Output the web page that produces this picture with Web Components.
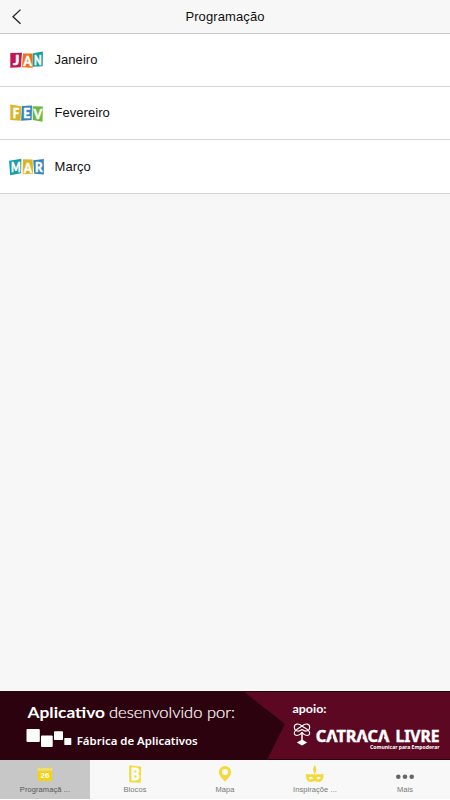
<!DOCTYPE html>
<html lang="pt-BR">
<head>
<meta charset="utf-8">
<title>Programação</title>
<style>
html,body{margin:0;height:100%;background:#f7f7f7;font-family:"Liberation Sans",Arial,sans-serif;color:#111}
</style>
</head>
<body>
<program-app></program-app>
<script>
class Base extends HTMLElement{
  constructor(){super();this.attachShadow({mode:'open'});}
  connectedCallback(){this.shadowRoot.innerHTML=this.view();}
}
customElements.define('nav-header',class extends Base{
  view(){return `<style>
:host{display:grid;grid-template-columns:40px 1fr 40px;align-items:center;height:33px;background:#f7f7f7;border-bottom:1px solid #c9c9c9;flex:none}
svg{display:block}
h1{margin:0;font-size:13px;font-weight:400;text-align:center;line-height:33px;letter-spacing:.1px}
</style><svg width="40" height="33" fill="none" stroke="#222" stroke-width="1.3"><path d="M20.500 9.600 13 16.700l7.500 7.100"/></svg><h1><slot></slot></h1>`}
});
const months={
 jan:`<path fill="#c2164f" d="M.3 3 12 2.800 10.800 17.300.3 17.700z"/><path fill="#ef701c" d="m13 3.400 9.700.1.1 14.300-10.900-.6z"/><path fill="#129fa3" d="m23 3.300 9.900-1.900-.2 14.800-9.700.6z"/>
 <text x="3" y="14.800" textLength="6.500">J</text><text x="13.400" y="15.600" textLength="8.300">A</text><text x="24" y="14.600" textLength="7.600">N</text>`,
 fev:`<path fill="#dcb528" d="m.3 1.600 11.200 1.700-1 14.500-10.200-.9z"/><path fill="#3485bd" d="m12 3.100 10-.6-.3 14.600-10.600.6z"/><path fill="#6ab83c" d="m22.600 3.300 10.300.3-.4 15.200-9.700-1.800z"/>
 <text x="2.800" y="14.800" textLength="6.500">F</text><text x="13.300" y="15.400" textLength="7">E</text><text x="23.600" y="15.800" textLength="8.700">V</text>`,
 mar:`<path fill="#16a0a5" d="m-1 3.700 12.400-2-.3 14.500-10.900 2z"/><path fill="#dcb528" d="m13 2.300 9.600.2.500 14.300-10.500.5z"/><path fill="#3485bd" d="m23.200 3.300 10.600-1.200.1 15.500-9.600-.8z"/>
 <text x="1" y="14.900" textLength="9.600">M</text><text x="13.800" y="15.500" textLength="8.300">A</text><text x="25" y="14.900" textLength="7.600">R</text>`};
customElements.define('month-row',class extends Base{
  view(){return `<style>
:host{display:flex;align-items:center;gap:10.500px;padding-left:10px;height:52px;background:#fff;border-bottom:1px solid #d6d6d6;flex:none}
:host(:last-child){height:53px}
svg{display:block;overflow:visible;flex:none}
svg text{font:900 14px Lato,sans-serif;fill:#fff;stroke:#fff;stroke-width:.45px}
span{font-size:13px;line-height:16px;color:#111;letter-spacing:.05px}
</style><svg width="34" height="20">${months[this.getAttribute('month')].replace(/textLength/g,'lengthAdjust="spacingAndGlyphs" textLength')}</svg><span><slot></slot></span>`}
});
customElements.define('sponsor-banner',class extends Base{
  view(){return `<style>
:host{display:block;height:69px;flex:none}
svg{display:block}
text{fill:#fff}
.l{font-family:Lato,sans-serif}.o{font-family:"Noto Sans","Open Sans",sans-serif}
.c{font:700 16.200px "Noto Sans",sans-serif;stroke:#fff;stroke-width:.45px}
</style><svg width="450" height="69" viewBox="0 691 450 69">
<path fill="#5c0822" d="M0 691h450v69H0z"/><path fill="#2d020f" d="M0 691h243l42 33-18 36H0z"/>
<path stroke="#27050f" d="M0 691.500h450M0 759.500h450"/>
<text class="l" x="27.500" y="717.600" font-size="16" font-weight="700" textLength="77.500" lengthAdjust="spacingAndGlyphs">Aplicativo</text>
<text class="l" x="109" y="717.600" font-size="16" font-weight="300" textLength="126" lengthAdjust="spacingAndGlyphs" stroke="#fff" stroke-width=".2">desenvolvido por:</text>
<g fill="#fff"><rect x="26.500" y="729" width="13.300" height="13" rx="1"/><rect x="41" y="735.400" width="11.700" height="11.600" rx="1"/><rect x="54" y="731.200" width="9" height="8.800" rx=".8"/><rect x="64.300" y="738" width="7" height="7" rx=".6"/></g>
<text class="o" x="76.700" y="745.300" font-size="11.500" font-weight="600" textLength="121" lengthAdjust="spacingAndGlyphs">Fábrica de Aplicativos</text>
<text class="l" x="292.500" y="713" font-size="10.500" font-weight="700" textLength="34" lengthAdjust="spacingAndGlyphs">apoio:</text>
<g fill="none" stroke="#fff" stroke-width="1.150"><path d="M302 729.500c-4 3.200-7.700 1-7.700-2.300s3.700-4.500 7.700-1.200c4-3.300 7.700-2.100 7.700 1.200s-3.700 5.500-7.700 2.300"/><path d="M302 726c-5 3.500-7.700 4.500-7.700 7 0 3.300 4.500 3.500 7.700-.3 3.200 3.800 7.700 3.600 7.700.3 0-2.500-2.700-3.500-7.700-7"/><path stroke-width="1.500" d="M302 732v10"/></g><path fill="#fff" d="m302 739.500 5.200 3-5.200 3-5.200-3z"/>
<text class="c" x="315.800" y="741.700" textLength="73.500" lengthAdjust="spacingAndGlyphs">CATRACA</text>
<text class="c" x="395.500" y="741.700" textLength="44" lengthAdjust="spacingAndGlyphs">LIVRE</text>
<g fill="#5c0822"><path d="m332.300 734.500 2 7.900h-4zM361.800 734.500l2 7.900h-4zM383.300 734.500l2 7.900h-4z"/></g>
<text class="o" x="370" y="748.800" font-size="5.800" font-weight="700" textLength="69.500" lengthAdjust="spacingAndGlyphs">Comunicar para Empoderar</text>
</svg>`}
});
const icons={
calendar:`<path fill="#f5d30c" d="M37.700 771.200h14.300v9.600H37.700z"/><path fill="#f3df69" d="M37.500 768h14.700v2.700H37.500z"/><path fill="#f5d30c" d="M39.500 767h2v1.600h-2zM48.500 767h2v1.600h-2z"/><text x="40.500" y="778.300" font-size="7" font-weight="700" fill="#fff" textLength="9" lengthAdjust="spacingAndGlyphs">26</text>`,
blocks:`<path fill="#f2da3c" d="m39.200 765.200 12 1.500-.5 16-11.500-.5z"/><text x="41" y="780.200" font-family="Lato" font-size="16.500" font-weight="900" fill="#fff" textLength="8.800" lengthAdjust="spacingAndGlyphs" stroke="#fff" stroke-width=".8">B</text>`,
pin:`<path fill="#f2da3c" fill-rule="evenodd" d="M45 766a6.100 6.100 0 0 0-6.100 6.100c0 4 3.800 6.900 6.100 9.700 2.300-2.800 6.100-5.700 6.100-9.700A6.100 6.100 0 0 0 45 766m0 3a3 3 0 1 1 0 6 3 3 0 0 1 0-6"/>`,
mask:`<path fill="#f2da3c" fill-rule="evenodd" d="M44.700 765c2.200 3 2 5.500.5 8.300v2h-1v-2c-1.500-2.800-1.500-5.300.5-8.300M36 773.700c2.500 1.200 5-.2 8.700 1.200 3.700-1.400 6.200 0 8.700-1.200.8 5.500-1.900 8.300-5 8.300-2 0-3-1.300-3.700-1.300s-1.700 1.300-3.700 1.300c-3.100 0-5.800-2.800-5-8.300m2.500 4.300c1.500 1.600 3.200 1.600 4.600.2-1.300-1.800-3.200-1.700-4.600-.2m7.800.2c1.400 1.400 3.100 1.400 4.600-.2-1.400-1.500-3.300-1.600-4.600.2"/>`,
dots:`<g fill="#666"><circle cx="38.300" cy="776.800" r="2.300"/><circle cx="45" cy="776.800" r="2.300"/><circle cx="51.700" cy="776.800" r="2.300"/></g>`};
customElements.define('tab-item',class extends Base{
  view(){return `<style>
:host{display:flex;flex-direction:column;align-items:center;height:39px;flex:1;background:#f8f8f8}
:host([active]){background:#c7c7c7}
svg{display:block;flex:none}
span{font-size:7.500px;line-height:9px;margin-top:1.200px;color:#777;white-space:pre;letter-spacing:.08px}
:host([active]) span{color:#555}
</style><svg width="90" height="24" viewBox="0 760 90 24">${icons[this.getAttribute('icon')]}</svg><span><slot></slot></span>`}
});
customElements.define('tab-bar',class extends Base{
  view(){return `<style>:host{display:flex;height:39px;border-bottom:1px solid #fff;flex:none}</style><slot></slot>`}
});
customElements.define('program-app',class extends Base{
  view(){return `<style>:host{display:flex;flex-direction:column;height:800px;width:450px}main{flex:1;background:#f7f7f7}</style>
<nav-header>Programação</nav-header>
<main><month-row month="jan">Janeiro</month-row><month-row month="fev">Fevereiro</month-row><month-row month="mar">Março</month-row></main>
<sponsor-banner></sponsor-banner>
<tab-bar><tab-item icon="calendar" active>Programaçã ...</tab-item><tab-item icon="blocks">Blocos</tab-item><tab-item icon="pin">Mapa</tab-item><tab-item icon="mask">Inspiraçõe ...</tab-item><tab-item icon="dots">Mais</tab-item></tab-bar>`}
});
</script>
</body>
</html>
